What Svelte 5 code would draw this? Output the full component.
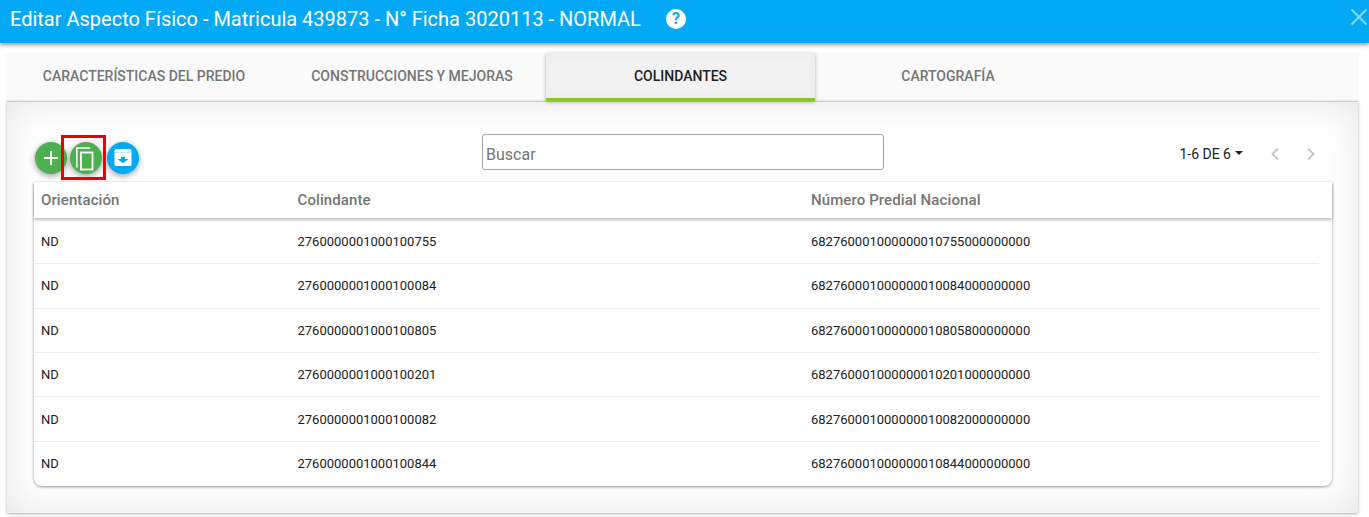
<script lang="ts">
	const tabs = [
		{ label: 'CARACTERÍSTICAS DEL PREDIO', active: false },
		{ label: 'CONSTRUCCIONES Y MEJORAS', active: false },
		{ label: 'COLINDANTES', active: true },
		{ label: 'CARTOGRAFÍA', active: false }
	];

	const rows = [
		{ orientation: 'ND', colindante: '2760000001000100755', npn: '682760001000000010755000000000' },
		{ orientation: 'ND', colindante: '2760000001000100084', npn: '682760001000000010084000000000' },
		{ orientation: 'ND', colindante: '2760000001000100805', npn: '682760001000000010805800000000' },
		{ orientation: 'ND', colindante: '2760000001000100201', npn: '682760001000000010201000000000' },
		{ orientation: 'ND', colindante: '2760000001000100082', npn: '682760001000000010082000000000' },
		{ orientation: 'ND', colindante: '2760000001000100844', npn: '682760001000000010844000000000' }
	];
</script>

<div class="page">
	<header class="topbar">
		<h1>Editar Aspecto Físico - Matricula 439873 - N° Ficha 3020113 - NORMAL</h1>
		<span class="help">?</span>
		<svg class="close" viewBox="0 0 18 18" width="18" height="18" aria-label="Cerrar">
			<path d="M1.5 1.5 16.5 16.5M16.5 1.5 1.5 16.5" />
		</svg>
	</header>

	<nav class="tabs">
		{#each tabs as tab}
			<div class="tab" class:active={tab.active}>{tab.label}</div>
		{/each}
	</nav>

	<section class="panel">
		<div class="toolbar">
			<div class="actions">
				<button class="fab green" aria-label="Agregar">
					<svg viewBox="0 0 16 16" width="16" height="16">
						<path d="M8 1v14M1 8h14" stroke="#fff" stroke-width="2" fill="none" />
					</svg>
				</button>
				<div class="marked">
					<button class="fab green" aria-label="Copiar">
						<svg viewBox="0 0 32 32" width="32" height="32">
							<path d="M6.800 25.500V6H20" stroke="#fff" stroke-width="1.600" fill="none" />
							<rect x="11" y="10.500" width="11.500" height="17" stroke="#fff" stroke-width="1.800" fill="none" />
						</svg>
					</button>
				</div>
				<button class="fab blue" aria-label="Archivar">
					<svg viewBox="0 0 18 18" width="18" height="18">
						<path d="M0.500 1.500Q0.500 0 2 0H16Q17.500 0 17.500 1.500V15.500Q17.500 17 16 17H2Q0.500 17 0.500 15.500Z" fill="#fff" />
						<path d="M0.500 3.200h17" stroke="#8ad6f9" stroke-width="0.800" />
						<path d="M7 7.700h4V10h3.500L9 14.200 3.500 10H7Z" fill="#03a9f4" />
					</svg>
				</button>
			</div>
			<input class="search" placeholder="Buscar" />
			<div class="pager">
				<span class="range">1-6 DE 6</span>
				<span class="caret"></span>
				<svg class="chev first" viewBox="0 0 10 14" width="10" height="14"><path d="M8 1.500 2.500 7 8 12.500" /></svg>
				<svg class="chev" viewBox="0 0 10 14" width="10" height="14"><path d="M2 1.500 7.500 7 2 12.500" /></svg>
			</div>
		</div>

		<div class="card">
			<div class="row head">
				<span>Orientación</span>
				<span>Colindante</span>
				<span>Número Predial Nacional</span>
			</div>
			{#each rows as row}
				<div class="row">
					<span>{row.orientation}</span>
					<span>{row.colindante}</span>
					<span>{row.npn}</span>
				</div>
			{/each}
		</div>
	</section>
</div>

<style>
	:global(body) {
		background: #fff;
		font-family: Roboto, 'Liberation Sans', sans-serif;
	}

	.page {
		width: 1369px;
		height: 517px;
		overflow: hidden;
	}

	.topbar {
		height: 43px;
		background: #03a9f4;
		box-shadow: 0 2px 4px rgba(0, 0, 0, 0.4);
		display: flex;
		align-items: center;
		padding-left: 10px;
		color: #fff;
		position: relative;
	}

	h1 {
		margin: 0 0 5px;
		font-size: 20px;
		font-weight: 400;
		line-height: 38px;
	}

	.help {
		width: 20px;
		height: 20px;
		margin-left: 25px;
		margin-bottom: 5px;
		border-radius: 50%;
		background: #fff;
		color: #03a9f4;
		font-size: 16px;
		font-weight: 700;
		line-height: 20px;
		text-align: center;
	}

	.close {
		position: absolute;
		right: 1px;
		top: 8px;
	}

	.close path {
		stroke: #8ad6f9;
		stroke-width: 2;
		fill: none;
	}

	.tabs {
		margin: 10px 0 0 6px;
		width: 1353px;
		height: 48px;
		padding-left: 4px;
		box-sizing: border-box;
		background: #fafafa;
		display: flex;
	}

	.tab {
		width: 268px;
		height: 48px;
		box-sizing: border-box;
		display: flex;
		align-items: center;
		justify-content: center;
		font-size: 14px;
		font-weight: 500;
		color: #757575;
		padding-bottom: 3px;
	}

	.tab.active {
		width: 269px;
		margin-right: -1px;
		color: #212121;
		background: #f2f2f2;
		border-bottom: 3px solid #8fc31f;
		box-shadow: 0 1px 4px rgba(0, 0, 0, 0.3), inset 0 0 14px rgba(0, 0, 0, 0.04);
		padding: 0;
		position: relative;
	}

	.panel {
		margin-left: 7px;
		width: 1351px;
		height: 412px;
		box-sizing: border-box;
		padding: 32px 26px 0 27px;
		background: #fff;
		border-top: 1px solid #ccc;
		box-shadow: 0 1px 3px rgba(0, 0, 0, 0.3), inset 0 0 40px rgba(0, 0, 0, 0.1);
	}

	.toolbar {
		height: 48px;
		display: flex;
		align-items: flex-start;
	}

	.actions {
		width: 448px;
		box-sizing: border-box;
		padding: 8px 0 0 1px;
		display: flex;
		align-items: center;
		flex: none;
	}

	.fab {
		width: 32px;
		height: 32px;
		padding: 0;
		border: 0;
		border-radius: 50%;
		display: flex;
		align-items: center;
		justify-content: center;
		box-shadow: 0 2px 6px rgba(0, 0, 0, 0.4);
		flex: none;
	}

	.green {
		background: #4caf50;
	}

	.blue {
		background: #03a9f4;
	}

	.marked {
		margin: 0 5px 0 3px;
		position: relative;
		flex: none;
	}

	/* red annotation drawn over the screenshot */
	.marked::after {
		content: '';
		position: absolute;
		left: -9px;
		top: -7px;
		width: 45px;
		height: 45px;
		box-sizing: border-box;
		border: 3px solid #f00000;
	}

	.search {
		width: 402px;
		height: 36px;
		box-sizing: border-box;
		margin: 0;
		padding: 4px 3px 0;
		border: 1px solid #a2a5ab;
		border-radius: 3px;
		font: 400 16px Roboto, sans-serif;
		background: #fff;
		flex: none;
	}

	.search::placeholder {
		color: #757575;
		opacity: 1;
	}

	.pager {
		display: flex;
		align-items: center;
		margin-left: auto;
		margin-right: 16px;
		height: 40px;
		font-size: 14px;
		color: #212121;
	}

	.caret {
		width: 0;
		height: 0;
		border-left: 4px solid transparent;
		border-right: 4px solid transparent;
		border-top: 4px solid #212121;
		margin: 0 0 2px 4px;
	}

	.chev {
		margin-left: 26px;
	}

	.chev.first {
		margin-left: 27px;
	}

	.chev path {
		fill: none;
		stroke: #c4c4c4;
		stroke-width: 1.800;
	}

	.card {
		width: 1298px;
		height: 304px;
		box-sizing: border-box;
		background: #fff;
		border-radius: 0 0 8px 8px;
		box-shadow: 0 1px 3px rgba(0, 0, 0, 0.4);
	}

	.row {
		display: grid;
		grid-template-columns: 256.500px 513.500px 1fr;
		align-items: center;
		height: 44.400px;
		box-sizing: border-box;
		padding-left: 7px;
		margin-right: 13px;
		font-size: 13px;
		color: #212121;
		border-top: 1px solid #ececec;
	}

	.row:nth-child(2) {
		border-top: 0;
		height: 45.200px;
		padding-top: 1px;
	}

	.row.head {
		height: 36px;
		margin-right: 0;
		border-top: 0;
		font-size: 15px;
		font-weight: 500;
		color: #757575;
		letter-spacing: 0.1px;
		box-shadow: 0 2px 3px rgba(0, 0, 0, 0.25);
		position: relative;
	}
</style>
